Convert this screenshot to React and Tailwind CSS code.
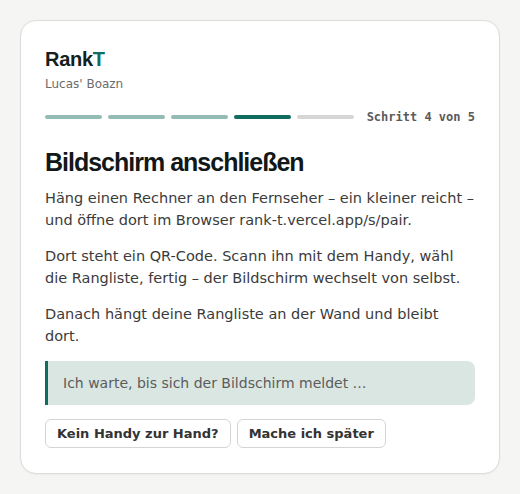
import React from "react";

const steps = ["done", "done", "done", "current", "todo"];

export default function App() {
  return (
    <div className="min-h-[494px] bg-[#f5f5f4] pt-5" style={{ fontFamily: '"DejaVu Sans", sans-serif' }}>
      <div className="mx-auto w-[480px] rounded-2xl border border-[#dcdcdc] bg-white px-6 pt-6 pb-[25px] shadow-[0_1px_2px_rgba(0,0,0,0.04)]">
        {/* Brand */}
        <div className="font-['Liberation_Sans',sans-serif] text-[20px] leading-7 font-bold tracking-[-0.015em] text-[#14201d]">
          Rank<span className="text-[#116b5e]">T</span>
        </div>
        <div className="mt-[3px] text-xs leading-4 text-[#6b6b6b]">Lucas' Boazn</div>

        {/* Progress */}
        <div className="mt-[17px] flex h-4 items-center gap-1.5">
          {steps.map((s, i) => (
            <span
              key={i}
              className={
                "h-1 w-[57px] rounded-full " +
                (s === "done" ? "bg-[#93bcb5]" : s === "current" ? "bg-[#116b5e]" : "bg-[#d6d6d6]")
              }
            />
          ))}
          <span className="ml-auto font-['DejaVu_Sans_Mono',monospace] text-xs leading-4 font-bold text-[#5a5a5a]">
            Schritt 4 von 5
          </span>
        </div>

        <h1 className="mt-[22px] font-['Liberation_Sans',sans-serif] text-[25px] leading-[30px] font-bold tracking-[-0.04em] text-[#111817]">
          Bildschirm anschließen
        </h1>

        <div className="mt-2.5 space-y-[14px] text-[14.5px] leading-[22px] text-[#3b3b3b]">
          <p>Häng einen Rechner an den Fernseher – ein kleiner reicht – und öffne dort im Browser rank-t.vercel.app/s/pair.</p>
          <p>Dort steht ein QR-Code. Scann ihn mit dem Handy, wähl die Rangliste, fertig – der Bildschirm wechselt von selbst.</p>
          <p>Danach hängt deine Rangliste an der Wand und bleibt dort.</p>
        </div>

        <div className="mt-[14px] rounded-r-lg border-l-[3px] border-[#116b5e] bg-[#d9e6e2] py-3 pl-[15px] pr-4 text-[14px] leading-5 text-[#5c5c5c]">
          Ich warte, bis sich der Bildschirm meldet …
        </div>

        <div className="mt-[14px] flex gap-1.5">
          <button className="h-[29px] rounded-md border border-[#d4d4d4] bg-white px-[11px] text-[13px] font-bold text-[#333]">
            Kein Handy zur Hand?
          </button>
          <button className="h-[29px] rounded-md border border-[#d4d4d4] bg-white px-[11px] text-[13px] font-bold text-[#333]">
            Mache ich später
          </button>
        </div>
      </div>
    </div>
  );
}
